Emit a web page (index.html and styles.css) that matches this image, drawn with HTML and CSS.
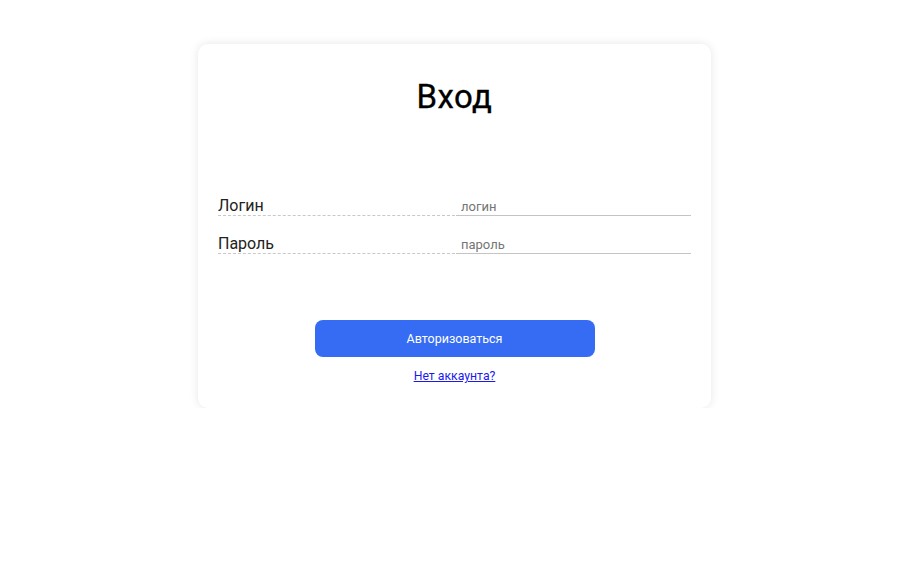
FILE: index.html
```html
<!DOCTYPE html>
<html lang="ru">
<head>
<meta charset="utf-8">
<title>Вход</title>
<link rel="stylesheet" href="styles.css">
</head>
<body>
<main class="page">
  <section class="card">
    <h1 class="title">Вход</h1>
    <form class="form">
      <div class="row">
        <label class="label" for="login">Логин</label>
        <input class="field" id="login" type="text" placeholder="логин">
      </div>
      <div class="row">
        <label class="label" for="password">Пароль</label>
        <input class="field" id="password" type="password" placeholder="пароль">
      </div>
      <button class="btn" type="button">Авторизоваться</button>
      <a class="link" href="#">Нет аккаунта?</a>
    </form>
  </section>
</main>
</body>
</html>
```

FILE: styles.css
```css
* { box-sizing: border-box; }
html, body { margin: 0; padding: 0; background: #fff; }
body { font-family: Roboto, "Noto Sans", Arial, sans-serif; color: #222; }
.page { display: flex; justify-content: center; padding-top: 44px; padding-left: 3px; }
.card {
  width: 513px;
  background: #fff;
  border-radius: 10px;
  box-shadow: 0 0 10px rgba(0, 0, 0, 0.1);
  padding: 34px 20px 24px;
  display: flex;
  flex-direction: column;
}
.title {
  margin: 0;
  font-size: 33px;
  line-height: 38px;
  font-weight: 400;
  letter-spacing: 0.4px;
  color: #000;
  text-align: center;
  -webkit-text-stroke: 0.3px #000;
}
.form { display: flex; flex-direction: column; margin-top: 80px; }
.row { display: flex; }
.row + .row { margin-top: 18px; }
.label {
  width: 237px;
  flex: none;
  font-size: 16px;
  line-height: 19px;
  height: 20px;
  color: #222;
  border-bottom: 1px dashed #c8c8c8;
}
.field {
  flex: 1 1 auto;
  width: 0;
  min-width: 0;
  height: 20px;
  margin: 0 0 0 1px;
  padding: 1px 5px 0;
  font-family: Roboto, "Noto Sans", Arial, sans-serif;
  font-size: 13px;
  border: 0;
  border-bottom: 1px solid #c4c4c4;
  outline: none;
  background: transparent;
  color: #333;
}
.field::placeholder { color: #757575; }
.btn {
  align-self: center;
  margin-top: 66px;
  width: 280px;
  height: 37px;
  border: 0;
  border-radius: 8px;
  background: #356cf3;
  color: #fff;
  font-family: Roboto, "Noto Sans", Arial, sans-serif;
  font-size: 12.5px;
}
.link {
  align-self: center;
  margin-top: 12px;
  font-size: 12.25px;
  line-height: 15px;
  color: #1a1aee;
}
```
